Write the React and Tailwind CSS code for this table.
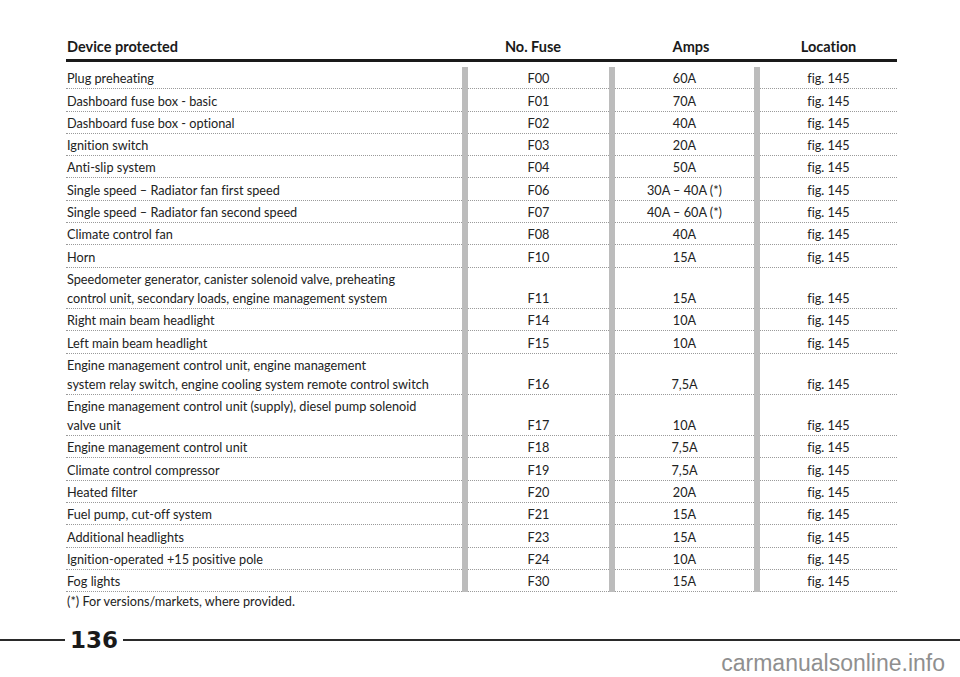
const rows = [
  [["Plug preheating"], "F00", "60A"],
  [["Dashboard fuse box - basic"], "F01", "70A"],
  [["Dashboard fuse box - optional"], "F02", "40A"],
  [["Ignition switch"], "F03", "20A"],
  [["Anti-slip system"], "F04", "50A"],
  [["Single speed – Radiator fan first speed"], "F06", "30A – 40A (*)"],
  [["Single speed – Radiator fan second speed"], "F07", "40A – 60A (*)"],
  [["Climate control fan"], "F08", "40A"],
  [["Horn"], "F10", "15A"],
  [
    [
      "Speedometer generator, canister solenoid valve, preheating",
      "control unit, secondary loads, engine management system",
    ],
    "F11",
    "15A",
  ],
  [["Right main beam headlight"], "F14", "10A"],
  [["Left main beam headlight"], "F15", "10A"],
  [
    [
      "Engine management control unit, engine management",
      "system relay switch, engine cooling system remote control switch",
    ],
    "F16",
    "7,5A",
  ],
  [
    [
      "Engine management control unit (supply), diesel pump solenoid",
      "valve unit",
    ],
    "F17",
    "10A",
  ],
  [["Engine management control unit"], "F18", "7,5A"],
  [["Climate control compressor"], "F19", "7,5A"],
  [["Heated filter"], "F20", "20A"],
  [["Fuel pump, cut-off system"], "F21", "15A"],
  [["Additional headlights"], "F23", "15A"],
  [["Ignition-operated +15 positive pole"], "F24", "10A"],
  [["Fog lights"], "F30", "15A"],
];

const Bar = () => <div className="w-[6px] shrink-0 self-stretch bg-[#bcbcbc]" />;

const cell = "border-b border-dotted border-[#9a9a9a] pt-[2.3px]";

const FuseRow = ({ device, fuse, amps }) => (
  <div className="flex">
    <div className={`w-[396px] shrink-0 ${cell}`}>
      {device.map((line) => (
        <div key={line} className="pl-px whitespace-nowrap">
          {line}
        </div>
      ))}
    </div>
    <Bar />
    <div className={`w-[141px] shrink-0 flex items-end justify-center ${cell}`}>{fuse}</div>
    <Bar />
    <div className={`w-[139px] shrink-0 flex items-end justify-center ${cell}`}>{amps}</div>
    <Bar />
    <div className={`w-[137px] shrink-0 flex items-end justify-center ${cell}`}>fig. 145</div>
  </div>
);

export default function App() {
  return (
    <div className="w-[960px] h-[677px] bg-white overflow-hidden text-[#222] font-['Lato','Open_Sans',sans-serif] [font-variant-ligatures:no-common-ligatures]">
      {/* fuse table */}
      <div className="pl-[66px] pt-[37px]">
        <div className="w-[831px]">
          <div className="flex h-[25px] pb-[3px] border-b-[3px] border-[#1a1a1a] text-[14.5px] font-bold leading-[20px] text-[#1a1a1a]">
            <div className="w-[396px] pl-px">Device protected</div>
            <div className="w-[153px] text-center pr-[11px]">No. Fuse</div>
            <div className="w-[145px] text-center pl-[7px]">Amps</div>
            <div className="w-[137px] text-center">Location</div>
          </div>

          <div className="mt-[5px] text-[12.7px] leading-[19px]">
            {rows.map(([device, fuse, amps]) => (
              <FuseRow key={fuse} device={device} fuse={fuse} amps={amps} />
            ))}
          </div>

          <div className="text-[12.7px] leading-[19px] pl-px">(*) For versions/markets, where provided.</div>
        </div>
      </div>

      {/* page number */}
      <div className="mt-[17px] flex items-center h-[24px]">
        <div className="w-[65px] h-[2px] bg-[#2a2a2a]" />
        <div className="px-[5px] text-[23px] leading-[24px] font-bold text-[#1a1a1a] font-['DejaVu_Sans',sans-serif]">
          136
        </div>
        <div className="flex-1 h-[2px] bg-[#2a2a2a]" />
      </div>

      <div className="flex justify-end pr-[15px] text-[23px] leading-[22px] text-[#8f8f8f] font-['Liberation_Sans',Arial,sans-serif]">
        carmanualsonline.info
      </div>
    </div>
  );
}
